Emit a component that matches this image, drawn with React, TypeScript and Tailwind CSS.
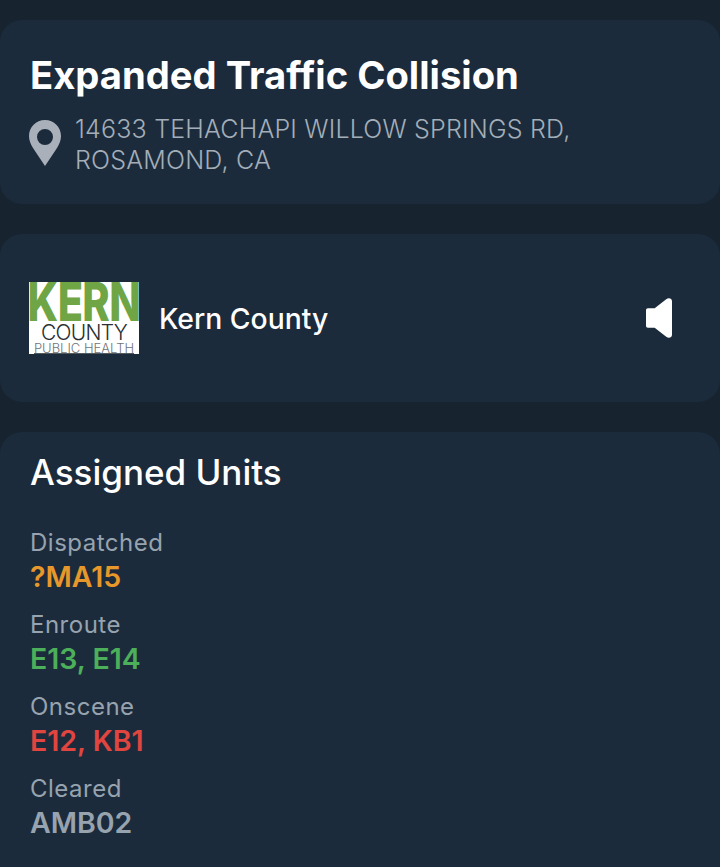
const font = "font-['Inter','Liberation_Sans',sans-serif]";

function Pin() {
  return (
    <svg width="32" height="46" viewBox="0 0 32 46" className="shrink-0 mt-[6px]">
      <path
        fillRule="evenodd"
        d="M16 0C7 0 0 7 0 16c0 4 1.500 8 4 12l12 18 12-18c2.500-4 4-8 4-12C32 7 25 0 16 0zm0 9a8 8 0 1 1 0 16 8 8 0 0 1 0-16z"
        fill="#a9b0b9"
      />
    </svg>
  );
}

function Speaker() {
  return (
    <svg width="26" height="42" viewBox="0 0 27 42">
      <path
        d="M2 11h7L21 1.500c2.500-2 6-1 6 2v35c0 3-3.500 4-6 2L9 31H2c-1.200 0-2-.8-2-2V13c0-1.200.8-2 2-2z"
        fill="#ffffff"
      />
    </svg>
  );
}

function Logo() {
  return (
    <div className="w-[110px] h-[72px] bg-white flex flex-col items-center shrink-0">
      <div className="h-[41px] w-full flex justify-center items-center">
        <span className="text-[41.500px] leading-[41px] font-extrabold text-[#6fa544] scale-y-[1.3] tracking-[-0.6px]">KERN</span>
      </div>
      <div className="h-[20px] text-[21px] leading-[20px] font-light text-[#2a2f33] tracking-[-0.7px]">
        COUNTY
      </div>
      <div className="h-[11px] text-[13px] leading-[11px] font-light text-[#6f7378] whitespace-nowrap border-b border-[#55585c]">
        PUBLIC HEALTH
      </div>
    </div>
  );
}

function UnitGroup({ label, units, color }: { label: string; units: string; color: string }) {
  return (
    <div className="flex flex-col">
      <div className="text-[24px] leading-[33px] text-[#97a3af] tracking-[0.5px]">{label}</div>
      <div className={`text-[28.500px] leading-[33px] mt-[1px] font-semibold ${color}`}>{units}</div>
    </div>
  );
}

export default function App() {
  return (
    <div className={`${font} w-[720px] h-[867px] overflow-hidden bg-[#17232f] pt-5 flex flex-col gap-[30px] antialiased`}>
      <section className="bg-[#1c2b3b] rounded-[22px] h-[184px] shrink-0 pl-[29px] pr-6 pt-[30px]">
        <h1 className="text-[38.200px] leading-[50px] font-bold text-white ml-[1px]">
          Expanded Traffic Collision
        </h1>
        <div className="flex items-start gap-[14px] mt-[14px]">
          <Pin />
          <div className="text-[25px] leading-[31px] font-light text-[#a3aeb9] tracking-[0.2px]">
            14633 TEHACHAPI WILLOW SPRINGS RD,
            <br />
            ROSAMOND, CA
          </div>
        </div>
      </section>

      <section className="bg-[#1c2b3b] rounded-[22px] h-[168px] shrink-0 pl-[29px] pr-[48px] flex items-center">
        <Logo />
        <div className="ml-5 text-[28.300px] leading-[34px] font-medium text-white mt-[1px]">Kern County</div>
        <div className="ml-auto flex">
          <Speaker />
        </div>
      </section>

      <section className="bg-[#1c2b3b] rounded-t-[22px] flex-1 pl-[30px] pt-[18px]">
        <h2 className="text-[35px] leading-[44px] font-medium text-white">Assigned Units</h2>
        <div className="flex flex-col gap-[15px] mt-[32px]">
          <UnitGroup label="Dispatched" units="?MA15" color="text-[#e8972a]" />
          <UnitGroup label="Enroute" units="E13, E14" color="text-[#4caf5a]" />
          <UnitGroup label="Onscene" units="E12, KB1" color="text-[#e0453f]" />
          <UnitGroup label="Cleared" units="AMB02" color="text-[#97a3af]" />
        </div>
      </section>
    </div>
  );
}
